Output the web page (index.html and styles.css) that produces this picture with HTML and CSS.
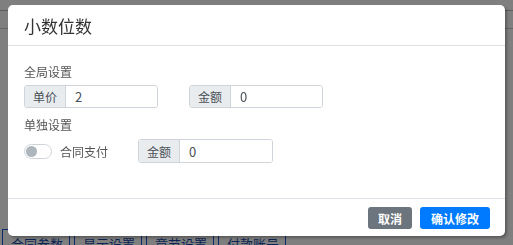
FILE: index.html
```html
<!DOCTYPE html>
<html lang="zh-CN">
<head>
  <meta charset="UTF-8">
  <meta name="viewport" content="width=device-width, initial-scale=1">
  <title>小数位数</title>
  <link rel="stylesheet" href="styles.css">
</head>
<body>
  <div class="page">
    <div class="topbar"></div>
    <div class="subbar"></div>
    <div class="tabs">
      <span class="tab">合同参数</span>
      <span class="tab">显示设置</span>
      <span class="tab">章节设置</span>
      <span class="tab">付款账号</span>
    </div>
  </div>

  <div class="backdrop"></div>

  <div class="modal">
    <div class="modal-header">
      <h5 class="modal-title">小数位数</h5>
    </div>
    <div class="modal-body">
      <div class="section-label">全局设置</div>
      <div class="row">
        <div class="input-group">
          <span class="addon">单价</span>
          <input type="text" value="2">
        </div>
        <div class="input-group">
          <span class="addon">金额</span>
          <input type="text" value="0">
        </div>
      </div>

      <div class="section-label second">单独设置</div>
      <div class="row switch-row">
        <label class="switch">
          <span class="track"><span class="knob"></span></span>
          <span class="switch-text">合同支付</span>
        </label>
        <div class="input-group">
          <span class="addon">金额</span>
          <input type="text" value="0">
        </div>
      </div>
    </div>
    <div class="modal-footer">
      <button class="btn btn-cancel">取消</button>
      <button class="btn btn-ok">确认修改</button>
    </div>
  </div>
</body>
</html>
```

FILE: styles.css
```css
body {
  margin: 0;
  padding: 0;
  font-family: "Noto Sans CJK SC", "Noto Sans", sans-serif;
  background: white;
  width: 513px;
  height: 245px;
  overflow: hidden;
}

/* page behind the dialog */
.page {
  height: 245px;
  display: flex;
  flex-direction: column;
}

.topbar {
  height: 10px;
  border-bottom: 1px solid #bbb;
}

.subbar {
  height: 17px;
  border-bottom: 1px solid #ccc;
}

.tabs {
  margin-top: auto;
  display: flex;
  gap: 4px;
  padding-left: 2px;
  height: 16px;
}

.tab {
  width: 68px;
  box-sizing: border-box;
  border: 1px solid #1d5bd0;
  border-bottom: none;
  color: #1a4aa8;
  font-size: 13px;
  line-height: 18px;
  padding: 5px 0 0 8px;
  white-space: nowrap;
}

.backdrop {
  position: fixed;
  inset: 0;
  background: rgba(0, 0, 0, 0.5);
}

/* dialog */
.modal {
  position: fixed;
  top: 5px;
  left: 8px;
  width: 497px;
  background: white;
  border-radius: 5px;
  box-shadow: 2px 2px 3px rgba(0, 0, 0, 0.3);
  color: #212529;
}

.modal-header {
  height: 40px;
  padding: 0 16px;
  display: flex;
  align-items: center;
  border-bottom: 1px solid #dee2e6;
}

.modal-title {
  margin: 0;
  font-size: 17px;
  font-weight: normal;
  color: #333;
}

.modal-body {
  padding: 16px 16px 35px 16px;
}

.section-label {
  font-size: 12px;
  line-height: 20px;
  color: #555;
  margin-bottom: 3px;
}

.section-label.second {
  margin-top: 7px;
  margin-bottom: 4px;
}

.row {
  display: flex;
  align-items: center;
  gap: 31px;
}

.input-group {
  display: flex;
  width: 134px;
  height: 23px;
  border: 1px solid #ced4da;
  border-radius: 3px;
  box-sizing: border-box;
  overflow: hidden;
}

.addon {
  width: 40px;
  background: #e9ecef;
  border-right: 1px solid #ced4da;
  color: #495057;
  font-size: 12px;
  display: flex;
  align-items: center;
  justify-content: center;
}

.input-group input {
  flex: 1;
  min-width: 0;
  border: none;
  outline: none;
  padding: 0 9px;
  font-family: inherit;
  font-size: 13px;
  color: #495057;
}

.switch-row {
  gap: 30px;
}

.switch-row .input-group {
  height: 24px;
  width: 135px;
}

.switch {
  display: flex;
  align-items: center;
  gap: 8px;
  width: 84px;
}

.track {
  width: 28px;
  height: 15px;
  border: 1px solid #ced4da;
  border-radius: 8px;
  box-sizing: border-box;
  display: flex;
  align-items: center;
  padding-left: 1px;
}

.knob {
  width: 11px;
  height: 11px;
  border-radius: 50%;
  background: #adb5bd;
}

.switch-text {
  font-size: 12px;
  color: #555;
}

.modal-footer {
  border-top: 1px solid #dee2e6;
  padding: 8px 15px 7px 0;
  display: flex;
  justify-content: flex-end;
  gap: 8px;
}

.btn {
  height: 22px;
  border: none;
  border-radius: 3px;
  color: white;
  font-family: inherit;
  font-size: 12px;
  font-weight: bold;
  padding: 0 10px;
  cursor: pointer;
}

.btn-cancel {
  background: #6c757d;
}

.btn-ok {
  background: #007bff;
  padding: 0 11px;
}
```
